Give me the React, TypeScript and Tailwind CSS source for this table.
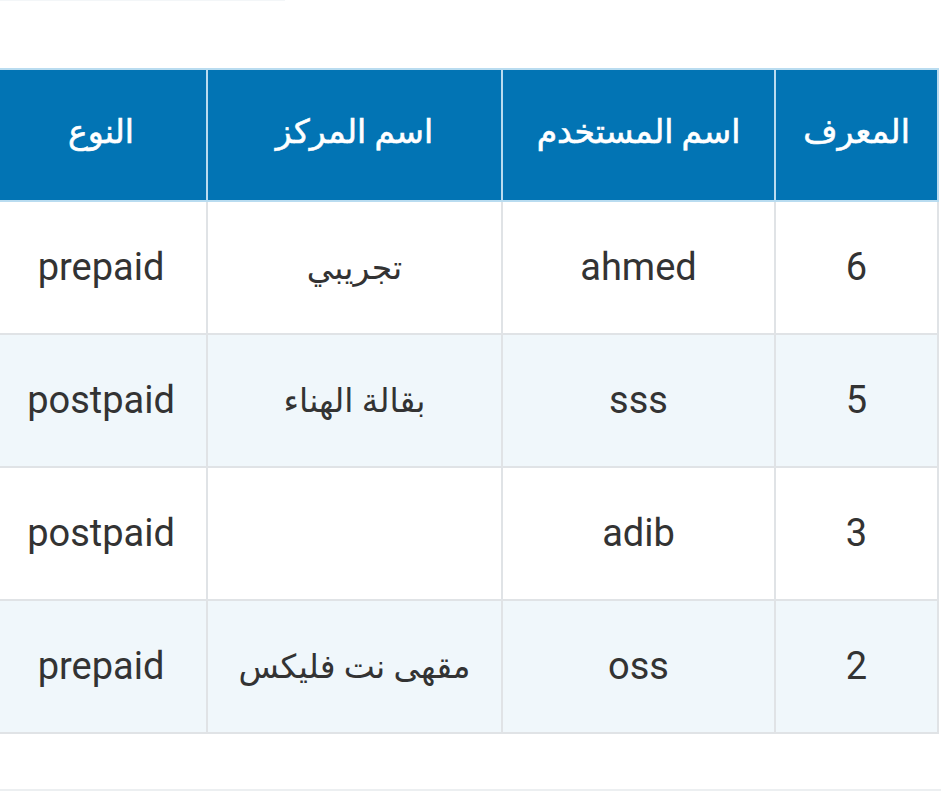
const rows = [
  { id: "6", user: "ahmed", center: "تجريبي", type: "prepaid" },
  { id: "5", user: "sss", center: "بقالة الهناء", type: "postpaid" },
  { id: "3", user: "adib", center: "", type: "postpaid" },
  { id: "2", user: "oss", center: "مقهى نت فليكس", type: "prepaid" },
];

export default function App() {
  return (
    <div
      className="w-[941px] h-[791px] bg-white overflow-hidden text-[#333]"
      style={{ fontFamily: "Roboto, 'DejaVu Sans', sans-serif" }}
    >
      <div className="h-[1px] w-[285px] bg-[#f3f6f8]" />
      <div dir="rtl" className="mt-[67px] mr-[2px] overflow-hidden">
        <table className="w-[945px] border-collapse table-fixed">
          <colgroup>
            <col className="w-[163px]" />
            <col className="w-[273px]" />
            <col className="w-[295px]" />
            <col />
          </colgroup>
          <thead>
            <tr className="h-[132px] bg-[#0274b4] text-white text-[33px] [-webkit-text-stroke:0.6px_white]">
              <th className="border-2 border-[#b9dcf0] font-medium pb-[6px]">المعرف</th>
              <th className="border-2 border-[#b9dcf0] font-medium pb-[6px]">اسم المستخدم</th>
              <th className="border-2 border-[#b9dcf0] font-medium pb-[6px]">اسم المركز</th>
              <th className="border-2 border-[#b9dcf0] font-medium pb-[6px]">النوع</th>
            </tr>
          </thead>
          <tbody>
            {rows.map((r, i) => (
              <tr
                key={r.id}
                className={`h-[133px] text-[38px] ${i % 2 === 1 ? "bg-[#f0f7fb]" : "bg-white"}`}
              >
                <td className="border-2 border-[#e0e3e6] text-center">{r.id}</td>
                <td className="border-2 border-[#e0e3e6] text-center">{r.user}</td>
                <td className="border-2 border-[#e0e3e6] text-center text-[33px]">{r.center}</td>
                <td className="border-2 border-[#e0e3e6] text-center">{r.type}</td>
              </tr>
            ))}
          </tbody>
        </table>
      </div>
      <div className="mt-[55px] h-[2px] bg-[#eceff1]" />
    </div>
  );
}
